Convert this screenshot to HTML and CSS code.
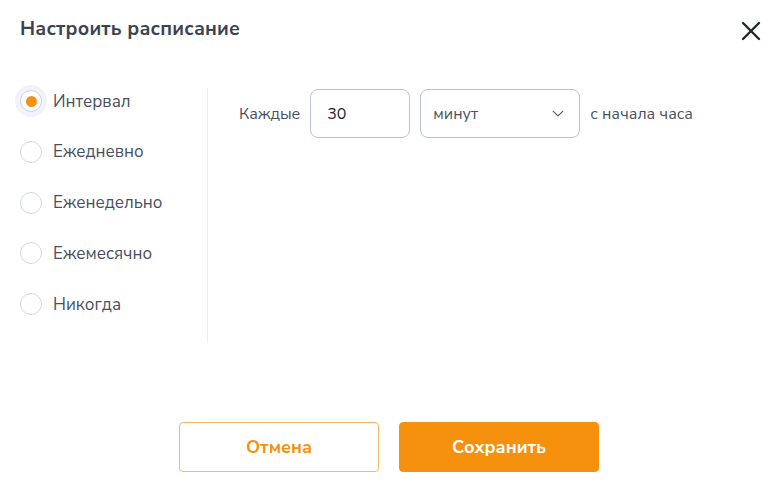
FILE: index.html
```html
<!DOCTYPE html>
<html lang="ru">
<head>
<meta charset="utf-8">
<link rel="stylesheet" href="styles.css">
</head>
<body>
<div class="modal">
  <div class="header">
    <h1 class="title">Настроить расписание</h1>
    <button class="close" aria-label="Закрыть">
      <svg width="20" height="20" viewBox="0 0 20 20"><path d="M2 2 L18 18 M18 2 L2 18" stroke="#1f2633" stroke-width="2.4" stroke-linecap="round" fill="none"/></svg>
    </button>
  </div>
  <div class="content">
    <div class="options">
      <label class="option"><span class="radio checked"><span class="dot"></span></span><span class="opt-label">Интервал</span></label>
      <label class="option"><span class="radio"></span><span class="opt-label">Ежедневно</span></label>
      <label class="option"><span class="radio"></span><span class="opt-label">Еженедельно</span></label>
      <label class="option"><span class="radio"></span><span class="opt-label">Ежемесячно</span></label>
      <label class="option"><span class="radio"></span><span class="opt-label">Никогда</span></label>
    </div>
    <div class="settings">
      <div class="row">
        <span class="text">Каждые</span>
        <div class="field num">30</div>
        <div class="field select"><span>минут</span>
          <svg width="12" height="7" viewBox="0 0 12 7"><path d="M0.8 0.8 L6 6 L11.2 0.8" stroke="#5a6272" stroke-width="1.2" fill="none"/></svg>
        </div>
        <span class="text">с начала часа</span>
      </div>
    </div>
  </div>
  <div class="footer">
    <button class="btn cancel">Отмена</button>
    <button class="btn save">Сохранить</button>
  </div>
</div>
</body>
</html>
```
FILE: styles.css
```css
html, body {
  margin: 0;
  padding: 0;
  background: #ffffff;
}
body {
  font-family: "Nunito Sans", Lato, "Noto Sans", sans-serif;
  color: #4a5161;
}
.modal {
  width: 782px;
  height: 497px;
  display: flex;
  flex-direction: column;
  box-sizing: border-box;
}
.header {
  display: flex;
  align-items: center;
  justify-content: space-between;
  padding: 17px 20px 0 20px;
  height: 24px;
}
.title {
  margin: 0;
  font-size: 19.5px;
  font-weight: 700;
  line-height: 24px;
  color: #3b4352;
  letter-spacing: 0.2px;
}
.close {
  border: none;
  background: none;
  padding: 0;
  width: 20px;
  height: 20px;
  margin-right: 1px;
  margin-top: 4px;
  display: flex;
}
.content {
  display: flex;
  margin-top: 47px;
  padding-left: 20px;
}
.options {
  width: 188px;
  box-sizing: border-box;
  border-right: 1px solid #eceef3;
  padding-top: 2px;
  padding-bottom: 28px;
  display: flex;
  flex-direction: column;
  gap: 28.8px;
}
.option {
  display: flex;
  align-items: center;
  height: 22px;
  gap: 11px;
}
.radio {
  width: 22px;
  height: 22px;
  flex: none;
  box-sizing: border-box;
  border: 1px solid #d2d9e6;
  border-radius: 50%;
  display: flex;
  align-items: center;
  justify-content: center;
  background: #fff;
}
.radio.checked {
  box-shadow: 0 0 0 5px #f1f3f8;
  border-color: #cdd5e4;
}
.dot {
  width: 11px;
  height: 11px;
  border-radius: 50%;
  background: #f5910d;
}
.opt-label {
  font-size: 17px;
  color: #485061;
}
.settings {
  padding-left: 31px;
  padding-top: 1px;
}
.row {
  display: flex;
  align-items: center;
  gap: 10px;
}
.text {
  font-size: 16px;
  color: #4a5161;
}
.field {
  height: 49px;
  box-sizing: border-box;
  border: 1px solid #b8c3d6;
  border-radius: 8px;
  display: flex;
  align-items: center;
  font-size: 16px;
}
.num {
  width: 100px;
  padding-left: 16px;
  color: #1f2633;
}
.select {
  width: 160px;
  padding: 0 15px 0 12px;
  justify-content: space-between;
  color: #4a5161;
}
.footer {
  display: flex;
  justify-content: center;
  gap: 20px;
  margin-top: auto;
  margin-bottom: 25px;
  padding-right: 4px;
}
.btn {
  width: 200px;
  height: 50px;
  border-radius: 4px;
  font-family: inherit;
  font-size: 18px;
  font-weight: 700;
  cursor: pointer;
}
.cancel {
  background: #fff;
  border: 1px solid #f7b864;
  color: #f5910d;
}
.save {
  background: #f5910d;
  border: 1px solid #f5910d;
  color: #fff;
}
```
